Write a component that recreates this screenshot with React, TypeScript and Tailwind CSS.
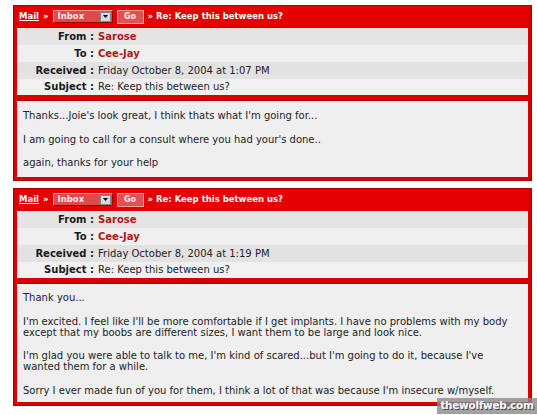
import React from 'react';

interface MailProps {
  received: string;
  paragraphs: string[][];
  bodyClass: string;
}

const rows = ['bg-[#e4e4e4]', 'bg-[#efefef]', 'bg-[#e2e2e2]', 'bg-[#f0f0f0]'];

function MailBox({ received, paragraphs, bodyClass }: MailProps) {
  const fields: { label: string; value: string; red?: boolean }[] = [
    { label: 'From', value: 'Sarose', red: true },
    { label: 'To', value: 'Cee-Jay', red: true },
    { label: 'Received', value: received },
    { label: 'Subject', value: 'Re: Keep this between us?' },
  ];

  return (
    <div className="w-[519px] border border-[#a80000] bg-[#d80000] px-[3px] pb-[3px]">
      {/* Top bar */}
      <div className="flex h-[21px] items-center gap-[4px] bg-[#e40000] pl-[2px] text-[8.5px] font-bold text-white">
        <span className="underline">Mail</span>
        <span>»</span>
        <div className="flex h-[13px] w-[60px] items-center justify-between border border-t-[#f4a0a0] border-l-[#f4a0a0] border-b-[#a00000] border-r-[#a00000] bg-[#dc4a4a] pl-[4px] pr-[1px]">
          <span className="text-[#ffe8e8]">Inbox</span>
          <span className="flex h-[10px] w-[11px] items-center justify-center border border-[#888] bg-[#d8d8d8]">
            <svg width="5" height="3" viewBox="0 0 5 3"><path d="M0 0h5L2.5 3z" fill="#000" /></svg>
          </span>
        </div>
        <div className="flex h-[14px] w-[27px] items-center justify-center border border-[#f0a0a0] bg-[#e05252] text-[8px] text-[#ffecec]">Go</div>
        <span>» Re: Keep this between us?</span>
      </div>
      {/* Header fields */}
      <div className="mt-[1px]">
        {fields.map((f, i) => (
          <div key={f.label} className={`flex items-center ${i === 3 ? 'h-[16px]' : 'h-[17px]'} ${rows[i]} text-[10px] leading-none`}>
            <span className="w-[77px] text-right font-bold text-[#1a1a1a]">{f.label} :</span>
            <span className={`pl-[4px] ${f.red ? 'font-bold text-[#b01818]' : 'text-[#222]'}`}>{f.value}</span>
          </div>
        ))}
      </div>
      {/* Body */}
      <div className={`mt-[5px] border-t border-[#b00000] bg-[#efefef] px-[6px] text-[10px] leading-[11px] text-[#222] ${bodyClass}`}>
        {paragraphs.map((p, i) => (
          <p key={i} className={i > 0 ? 'mt-[12.5px]' : ''}>
            {p.map((line, j) => (
              <span key={j} className="block whitespace-nowrap">{line}</span>
            ))}
          </p>
        ))}
      </div>
    </div>
  );
}

export default function App() {
  return (
    <div className="relative h-[415px] w-[537px] overflow-hidden bg-white pl-[13px] pt-[5px]" style={{ fontFamily: '"DejaVu Sans", Verdana, sans-serif' }}>
      <MailBox
        received="Friday October 8, 2004 at 1:07 PM"
        bodyClass="h-[77px] pt-[9px]"
        paragraphs={[
          ["Thanks...Joie's look great, I think thats what I'm going for..."],
          ["I am going to call for a consult where you had your's done.."],
          ['again, thanks for your help'],
        ]}
      />
      <div className="h-[7px]" />
      <MailBox
        received="Friday October 8, 2004 at 1:19 PM"
        bodyClass="h-[119px] pt-[8px]"
        paragraphs={[
          ['Thank you...'],
          [
            "I'm excited. I feel like I'll be more comfortable if I get implants. I have no problems with my body",
            'except that my boobs are different sizes, I want them to be large and look nice.',
          ],
          [
            "I'm glad you were able to talk to me, I'm kind of scared...but I'm going to do it, because I've",
            'wanted them for a while.',
          ],
          ["Sorry I ever made fun of you for them, I think a lot of that was because I'm insecure w/myself."],
        ]}
      />
      {/* Watermark */}
      <div className="absolute left-[437px] top-[398px] flex h-[16px] w-[100px] items-center justify-center bg-[#8a8a8a]/80 text-[10.5px] font-bold tracking-[-0.3px] text-white [text-shadow:1px_1px_0_#444]">
        thewolfweb.com
      </div>
    </div>
  );
}
